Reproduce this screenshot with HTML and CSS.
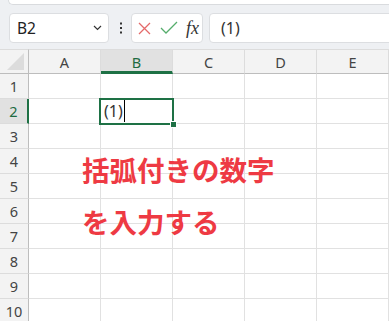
FILE: index.html
```html
<!DOCTYPE html>
<html lang="ja">
<head>
    <meta charset="UTF-8">
    <meta name="viewport" content="width=device-width, initial-scale=1.0">
    <title>括弧付きの数字</title>
    <link rel="stylesheet" href="styles.css">
</head>
<body>
    <div class="ribbon"></div>
    <div class="formula-bar">
        <div class="name-box">
            <span>B2</span>
            <svg class="chevron" width="9" height="6" viewBox="0 0 9 6">
                <path d="M1 1 L4.5 4.5 L8 1" fill="none" stroke="#333" stroke-width="1.2"/>
            </svg>
        </div>
        <svg class="more" width="4" height="12" viewBox="0 0 4 12">
            <rect x="1" y="0.5" width="2" height="2" fill="#333"/>
            <rect x="1" y="5" width="2" height="2" fill="#333"/>
            <rect x="1" y="9.5" width="2" height="2" fill="#333"/>
        </svg>
        <div class="fx-buttons">
            <svg width="13" height="13" viewBox="0 0 13 13">
                <path d="M1 1 L12 12 M12 1 L1 12" stroke="#e46a6a" stroke-width="1.3"/>
            </svg>
            <svg width="18" height="14" viewBox="0 0 18 14">
                <path d="M1 7 L6 12 L17 1" fill="none" stroke="#55ad6c" stroke-width="1.3"/>
            </svg>
            <span class="fx">fx</span>
        </div>
        <div class="formula-input">(1)</div>
    </div>

    <div class="sheet">
        <div class="grid">
            <div class="corner"><span class="triangle"></span></div>
            <div class="col-head">A</div>
            <div class="col-head active">B</div>
            <div class="col-head">C</div>
            <div class="col-head">D</div>
            <div class="col-head">E</div>
        </div>
        <div class="grid" id="rows"></div>

        <div class="selection"><span class="handle"></span></div>
        <div class="note">括弧付きの数字<br>を入力する</div>
    </div>

    <script>
        const rows = document.getElementById('rows');
        for (let r = 1; r <= 10; r++) {
            const head = document.createElement('div');
            head.className = 'row-head' + (r === 2 ? ' active' : '');
            head.textContent = r;
            rows.appendChild(head);
            for (let c = 0; c < 5; c++) {
                const cell = document.createElement('div');
                cell.className = 'cell';
                if (r === 2 && c === 1) {
                    cell.innerHTML = '<span class="value">(1)</span><span class="caret"></span>';
                }
                rows.appendChild(cell);
            }
        }
    </script>
</body>
</html>
```

FILE: styles.css
```css
body {
    margin: 0;
    background-color: #eef0f3;
    font-family: "Noto Sans", "Liberation Sans", sans-serif;
    overflow: hidden;
    width: 389px;
    height: 321px;
}

.ribbon {
    height: 4px;
    margin-left: 8px;
    background-color: #ffffff;
    border-bottom: 1px solid #d9dbde;
    border-left: 1px solid #d9dbde;
    border-bottom-left-radius: 8px;
}

.formula-bar {
    display: flex;
    align-items: center;
    height: 30px;
    padding: 8px 0 6px 9px;
}

.name-box {
    display: flex;
    align-items: center;
    justify-content: space-between;
    box-sizing: border-box;
    width: 100px;
    height: 30px;
    padding: 0 6px 0 7px;
    background-color: #ffffff;
    border: 1px solid #dcdee1;
    border-radius: 4px;
    font-size: 15.5px;
    color: #222222;
}

.more {
    margin: 0 8px 0 10px;
}

.fx-buttons {
    display: flex;
    align-items: center;
    box-sizing: border-box;
    width: 72px;
    height: 30px;
    padding-left: 6px;
    gap: 9px;
    background-color: #ffffff;
    border: 1px solid #dcdee1;
    border-radius: 4px;
}

.fx {
    font-family: "Liberation Serif", serif;
    font-style: italic;
    font-size: 18px;
    color: #333333;
    margin-left: -1px;
}

.formula-input {
    flex: 1;
    box-sizing: border-box;
    height: 30px;
    margin-left: 6px;
    margin-right: -10px;
    padding: 3px 0 0 11px;
    background-color: #ffffff;
    border: 1px solid #dcdee1;
    border-radius: 4px;
    font-size: 16px;
    color: #333333;
}

.sheet {
    position: relative;
    background-color: #ffffff;
}

.grid {
    display: grid;
    grid-template-columns: 29px repeat(5, 72px);
    grid-auto-rows: 25px;
}

.grid > div {
    box-sizing: border-box;
}

.corner, .col-head, .row-head {
    background-color: #f3f3f3;
    color: #444444;
    font-size: 14.5px;
    display: flex;
    align-items: center;
    justify-content: center;
}

.corner {
    position: relative;
    border-right: 1px solid #bdbdbd;
    border-bottom: 1px solid #bdbdbd;
    border-top: 1px solid #dcdcdc;
}

.triangle {
    position: absolute;
    right: 4px;
    bottom: 3px;
    width: 0;
    height: 0;
    border-left: 17px solid transparent;
    border-bottom: 17px solid #dcdcdc;
}

.col-head {
    border-top: 1px solid #dcdcdc;
    border-right: 1px solid #dcdcdc;
    border-bottom: 1px solid #bdbdbd;
}

.col-head.active {
    background-color: #e1e1e1;
    color: #1e6b41;
    border-bottom: 3px solid #1e7145;
    padding-top: 2px;
}

.row-head {
    border-right: 1px solid #bdbdbd;
    border-bottom: 1px solid #dcdcdc;
}

.row-head.active {
    background-color: #e1e1e1;
    color: #1e6b41;
    border-right: 2px solid #1e7145;
}

.cell {
    border-right: 1px solid #e1e1e1;
    border-bottom: 1px solid #e1e1e1;
    display: flex;
    align-items: center;
    padding-left: 3px;
    font-size: 16px;
    color: #333333;
}

.caret {
    width: 1px;
    height: 22px;
    margin-left: 1px;
    background-color: #000000;
}

.selection {
    position: absolute;
    left: 99px;
    top: 49px;
    width: 75px;
    height: 27px;
    box-sizing: border-box;
    border: 2px solid #1e7145;
}

.handle {
    position: absolute;
    right: -5px;
    bottom: -5px;
    width: 5px;
    height: 5px;
    background-color: #1e7145;
    border: 1px solid #ffffff;
}

.note {
    position: absolute;
    left: 82px;
    top: 94px;
    font-family: "Noto Sans CJK JP", sans-serif;
    font-weight: bold;
    font-size: 27.5px;
    line-height: 52px;
    color: #ee3a43;
    white-space: nowrap;
}
```
